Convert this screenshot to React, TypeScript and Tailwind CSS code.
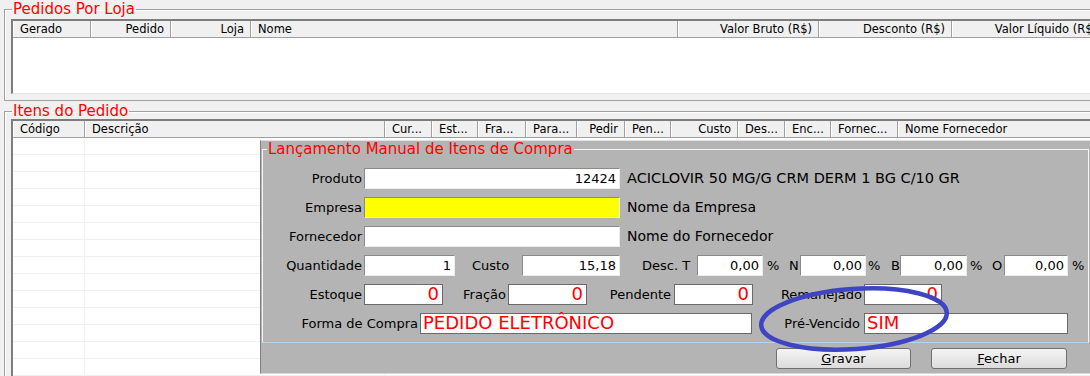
const ordersCols = [
  { label: "Gerado", w: "w-[78px]", align: "text-left" },
  { label: "Pedido", w: "w-[80px]", align: "text-right" },
  { label: "Loja", w: "w-[80px]", align: "text-right" },
  { label: "Nome", w: "w-[427px]", align: "text-left" },
  { label: "Valor Bruto (R$)", w: "w-[141px]", align: "text-right" },
  { label: "Desconto (R$)", w: "w-[133px]", align: "text-right" },
  { label: "Valor Líquido (R$)", w: "w-[152px]", align: "text-right" },
];

const itemCols = [
  { label: "Código", w: "w-[72px]", align: "text-left" },
  { label: "Descrição", w: "w-[300px]", align: "text-left" },
  { label: "Cur...", w: "w-[47px]", align: "text-left" },
  { label: "Est...", w: "w-[46px]", align: "text-left" },
  { label: "Fra...", w: "w-[48px]", align: "text-left" },
  { label: "Para...", w: "w-[51px]", align: "text-left" },
  { label: "Pedir", w: "w-[48px]", align: "text-right" },
  { label: "Pen...", w: "w-[46px]", align: "text-left" },
  { label: "Custo", w: "w-[67px]", align: "text-right" },
  { label: "Des...", w: "w-[47px]", align: "text-left" },
  { label: "Enc...", w: "w-[46px]", align: "text-left" },
  { label: "Fornec...", w: "w-[67px]", align: "text-left" },
  { label: "Nome Fornecedor", w: "w-[300px]", align: "text-left" },
];

interface Col {
  label: string;
  w: string;
  align: string;
}

function HeaderRow({ cols }: { cols: Col[] }) {
  return (
    <div className="flex h-[17px] bg-[#f0f0f0] border-b border-[#a0a0a0]">
      {cols.map((c) => (
        <div
          key={c.label}
          className={`${c.w} ${c.align} shrink-0 h-full px-[6px] border-l border-l-white border-r border-r-[#a0a0a0] text-[11.5px] leading-[16px] whitespace-nowrap overflow-hidden`}
        >
          {c.label}
        </div>
      ))}
    </div>
  );
}

const sunken =
  "border border-t-[#8a8a8a] border-l-[#8a8a8a] border-r-[#ececec] border-b-[#ececec]";
const dark = "border border-[#6a6a6a]";

interface FieldProps {
  w: string;
  value?: string;
  style?: string;
  red?: boolean;
  left?: boolean;
  bg?: string;
}

function Field({ w, value, style = sunken, red, left, bg = "bg-white" }: FieldProps) {
  return (
    <div
      className={`${w} ${style} ${bg} shrink-0 h-full flex whitespace-nowrap ${
        left ? "justify-start pl-[2px]" : "justify-end pr-[3px]"
      } ${red ? "items-end text-[18px] text-[#ff0000] leading-[20px]" : "items-center text-[13px]"}`}
    >
      {value}
    </div>
  );
}

function Label({ w, children, left }: { w: string; children: React.ReactNode; left?: string }) {
  return (
    <div className={`${w} ${left ?? "text-right"} shrink-0 text-[13px] whitespace-nowrap`}>
      {children}
    </div>
  );
}

function App() {
  return (
    <div className="relative w-[1090px] h-[376px] overflow-hidden bg-[#f0f0f0] font-['DejaVu_Sans',sans-serif] text-black">
      <fieldset className="mt-[1px] ml-[4px] w-[1100px] h-[100px] border border-[#a0a0a0] shadow-[inset_1px_1px_0_#fff]">
        <legend className="ml-[7px] px-[1px] text-[15px] leading-[16px] text-[#ff0000]">
          Pedidos Por Loja
        </legend>
        <div className="mt-[2px] ml-[6px] h-[75px] border-l-2 border-t-2 border-[#7d7d7d] border-b border-b-[#e3e3e3] bg-white">
          <HeaderRow cols={ordersCols} />
        </div>
      </fieldset>

      <fieldset className="mt-[3px] ml-[4px] w-[1100px] h-[300px] border border-[#a0a0a0] shadow-[inset_1px_1px_0_#fff]">
        <legend className="ml-[7px] px-[1px] text-[15px] leading-[15px] text-[#ff0000]">
          Itens do Pedido
        </legend>
        <div className="ml-[6px] h-[280px] border-l-2 border-t-2 border-[#7d7d7d] bg-white">
          <HeaderRow cols={itemCols} />
          {Array.from({ length: 14 }).map((_, i) => (
            <div key={i} className="flex h-[17px] border-b border-[#f0f0f0]">
              <div className="w-[72px] shrink-0 border-r border-[#f0f0f0]" />
              <div className="w-[300px] shrink-0 border-r border-[#f0f0f0]" />
            </div>
          ))}
        </div>
      </fieldset>

      {/* janela de lançamento manual */}
      <div className="absolute left-[260px] top-[140px] w-[840px] h-[234px] bg-[#b4b4b4] border-l border-l-[#808080] border-t border-t-[#e0e0e0] border-b border-b-[#d8d8d8]">
        <fieldset className="ml-[1px] w-[827px] border border-[#f4f4f4] border-b-[#b9d1ea]">
          <legend className="ml-[4px] px-[1px] text-[15px] leading-[17px] text-[#ff0000]">
            Lançamento Manual de Itens de Compra
          </legend>
          <div className="mt-[10px] pb-[8px] flex flex-col gap-[8px]">
            <div className="flex items-center h-[21px]">
              <Label w="w-[99px]">Produto</Label>
              <div className="ml-[2px] h-full flex">
                <Field w="w-[256px]" value="12424" />
              </div>
              <span className="ml-[7px] text-[14.5px] whitespace-nowrap">
                ACICLOVIR 50 MG/G CRM DERM 1 BG C/10 GR
              </span>
            </div>
            <div className="flex items-center h-[21px]">
              <Label w="w-[99px]">Empresa</Label>
              <div className="ml-[2px] h-full flex">
                <Field w="w-[256px]" bg="bg-[#ffff00]" />
              </div>
              <span className="ml-[7px] text-[14px] whitespace-nowrap">Nome da Empresa</span>
            </div>
            <div className="flex items-center h-[21px]">
              <Label w="w-[99px]">Fornecedor</Label>
              <div className="ml-[2px] h-full flex">
                <Field w="w-[256px]" />
              </div>
              <span className="ml-[7px] text-[14px] whitespace-nowrap">Nome do Fornecedor</span>
            </div>
            <div className="flex items-center h-[21px]">
              <Label w="w-[99px]">Quantidade</Label>
              <div className="ml-[2px] h-full flex items-center">
                <Field w="w-[91px]" value="1" />
                <Label w="w-[67px]" left="text-left pl-[17px]">Custo</Label>
                <Field w="w-[98px]" value="15,18" />
                <Label w="w-[77px]" left="text-left pl-[22px]">Desc. T</Label>
                <Field w="w-[66px]" value="0,00" />
                <Label w="w-[26px]" left="text-left pl-[4px]">%</Label>
                <Label w="w-[11px]" left="text-left">N</Label>
                <Field w="w-[66px]" value="0,00" />
                <Label w="w-[25px]" left="text-left pl-[2px]">%</Label>
                <Label w="w-[9px]" left="text-left">B</Label>
                <Field w="w-[67px]" value="0,00" />
                <Label w="w-[25px]" left="text-left pl-[3px]">%</Label>
                <Label w="w-[12px]" left="text-left">O</Label>
                <Field w="w-[64px]" value="0,00" />
                <Label w="w-[20px]" left="text-left pl-[4px]">%</Label>
              </div>
            </div>
            <div className="flex items-center h-[21px]">
              <Label w="w-[99px]">Estoque</Label>
              <div className="ml-[2px] h-full flex items-center">
                <Field w="w-[79px]" value="0" style={dark} red />
                <Label w="w-[65px]" left="text-right pr-[2px]">Fração</Label>
                <Field w="w-[79px]" value="0" style={dark} red />
                <Label w="w-[87px]" left="text-right pr-[3px]">Pendente</Label>
                <Field w="w-[79px]" value="0" style={dark} red />
                <Label w="w-[111px]" left="text-right pr-[2px]">Remanejado</Label>
                <Field w="w-[78px]" value="0" style={dark} red />
              </div>
            </div>
            <div className="flex items-center h-[21px]">
              <Label w="w-[155px]">Forma de Compra</Label>
              <div className="ml-[2px] h-full flex items-center">
                <Field w="w-[332px]" value="PEDIDO ELETRÔNICO" style={dark} red left />
                <Label w="w-[112px]" left="text-right pr-[4px]">Pré-Vencido</Label>
                <Field w="w-[204px]" value="SIM" style={dark} red left />
              </div>
            </div>
          </div>
        </fieldset>

        <div className="mt-[5px] ml-[515px] flex gap-[20px]">
          <button className="w-[135px] h-[21px] rounded-[3px] border border-[#707070] bg-linear-to-b from-[#f4f4f4] to-[#dcdcdc] text-[13px] leading-[19px]">
            <span className="underline">G</span>ravar
          </button>
          <button className="w-[136px] h-[21px] rounded-[3px] border border-[#707070] bg-linear-to-b from-[#f4f4f4] to-[#dcdcdc] text-[13px] leading-[19px]">
            <span className="underline">F</span>echar
          </button>
        </div>
      </div>

      {/* marcação à mão em volta do Pré-Vencido */}
      <svg className="absolute left-[753px] top-[284px] pointer-events-none" width="204" height="72">
        <ellipse
          cx="101"
          cy="35"
          rx="93"
          ry="30"
          transform="rotate(-4 101 35)"
          fill="none"
          stroke="#3f44c2"
          strokeWidth="4.5"
        />
      </svg>
    </div>
  );
}

export default App;
